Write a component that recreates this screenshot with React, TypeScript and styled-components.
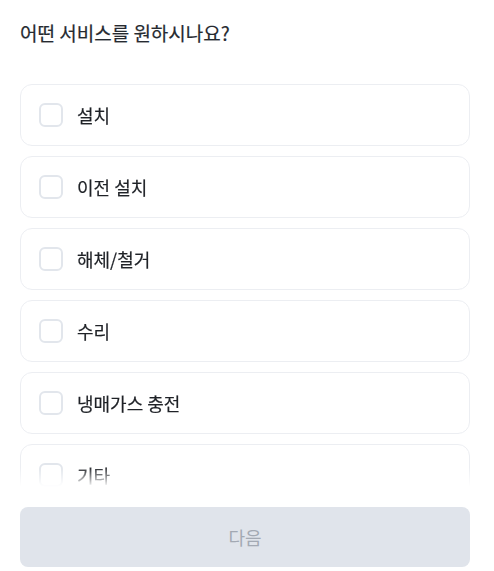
import styled, { createGlobalStyle } from "styled-components";

const services = ["설치", "이전 설치", "해체/철거", "수리", "냉매가스 충전", "기타"];

function App() {
  return (
    <>
      <GlobalStyle />
      <Page>
        <Title>어떤 서비스를 원하시나요?</Title>
        <List>
          {services.map((name) => (
            <Option key={name}>
              <Check />
              <Label>{name}</Label>
            </Option>
          ))}
        </List>
        <NextButton disabled>다음</NextButton>
      </Page>
    </>
  );
}

const GlobalStyle = createGlobalStyle`
  body {
    margin: 0;
    background: #fff;
    font-family: "Noto Sans CJK KR", "Noto Sans", sans-serif;
  }
`;

const Page = styled.div`
  height: 571px;
  box-sizing: border-box;
  display: flex;
  flex-direction: column;
  padding: 21px 24px 4px 20px;
`;

const Title = styled.h1`
  margin: 0;
  font-size: 19px;
  line-height: 24px;
  font-weight: 400;
  color: #262a30;
  -webkit-text-stroke: 0.2px #262a30;
`;

const List = styled.div`
  flex: 1;
  min-height: 0;
  margin-top: 39px;
  display: flex;
  flex-direction: column;
  gap: 10px;
  overflow: hidden;
  -webkit-mask-image: linear-gradient(to bottom, #000 calc(100% - 20px), transparent);
  mask-image: linear-gradient(to bottom, #000 calc(100% - 20px), transparent);
`;

const Option = styled.label`
  flex-shrink: 0;
  height: 62px;
  box-sizing: border-box;
  display: flex;
  align-items: center;
  gap: 14px;
  padding: 0 18px;
  border: 1px solid #eceef2;
  border-radius: 12px;
  background: #fff;
`;

const Check = styled.span`
  width: 24px;
  height: 24px;
  box-sizing: border-box;
  border: 2px solid #e2e6ec;
  border-radius: 6px;
  background: #fff;
`;

const Label = styled.span`
  font-size: 18px;
  font-weight: 400;
  color: #1f2227;
  -webkit-text-stroke: 0.2px #1f2227;
`;

const NextButton = styled.button`
  margin-top: 20px;
  height: 60px;
  flex-shrink: 0;
  border: none;
  border-radius: 8px;
  background: #e0e4eb;
  color: #a3a9b3;
  font-family: inherit;
  font-size: 18px;
  font-weight: 400;
`;

export default App;
